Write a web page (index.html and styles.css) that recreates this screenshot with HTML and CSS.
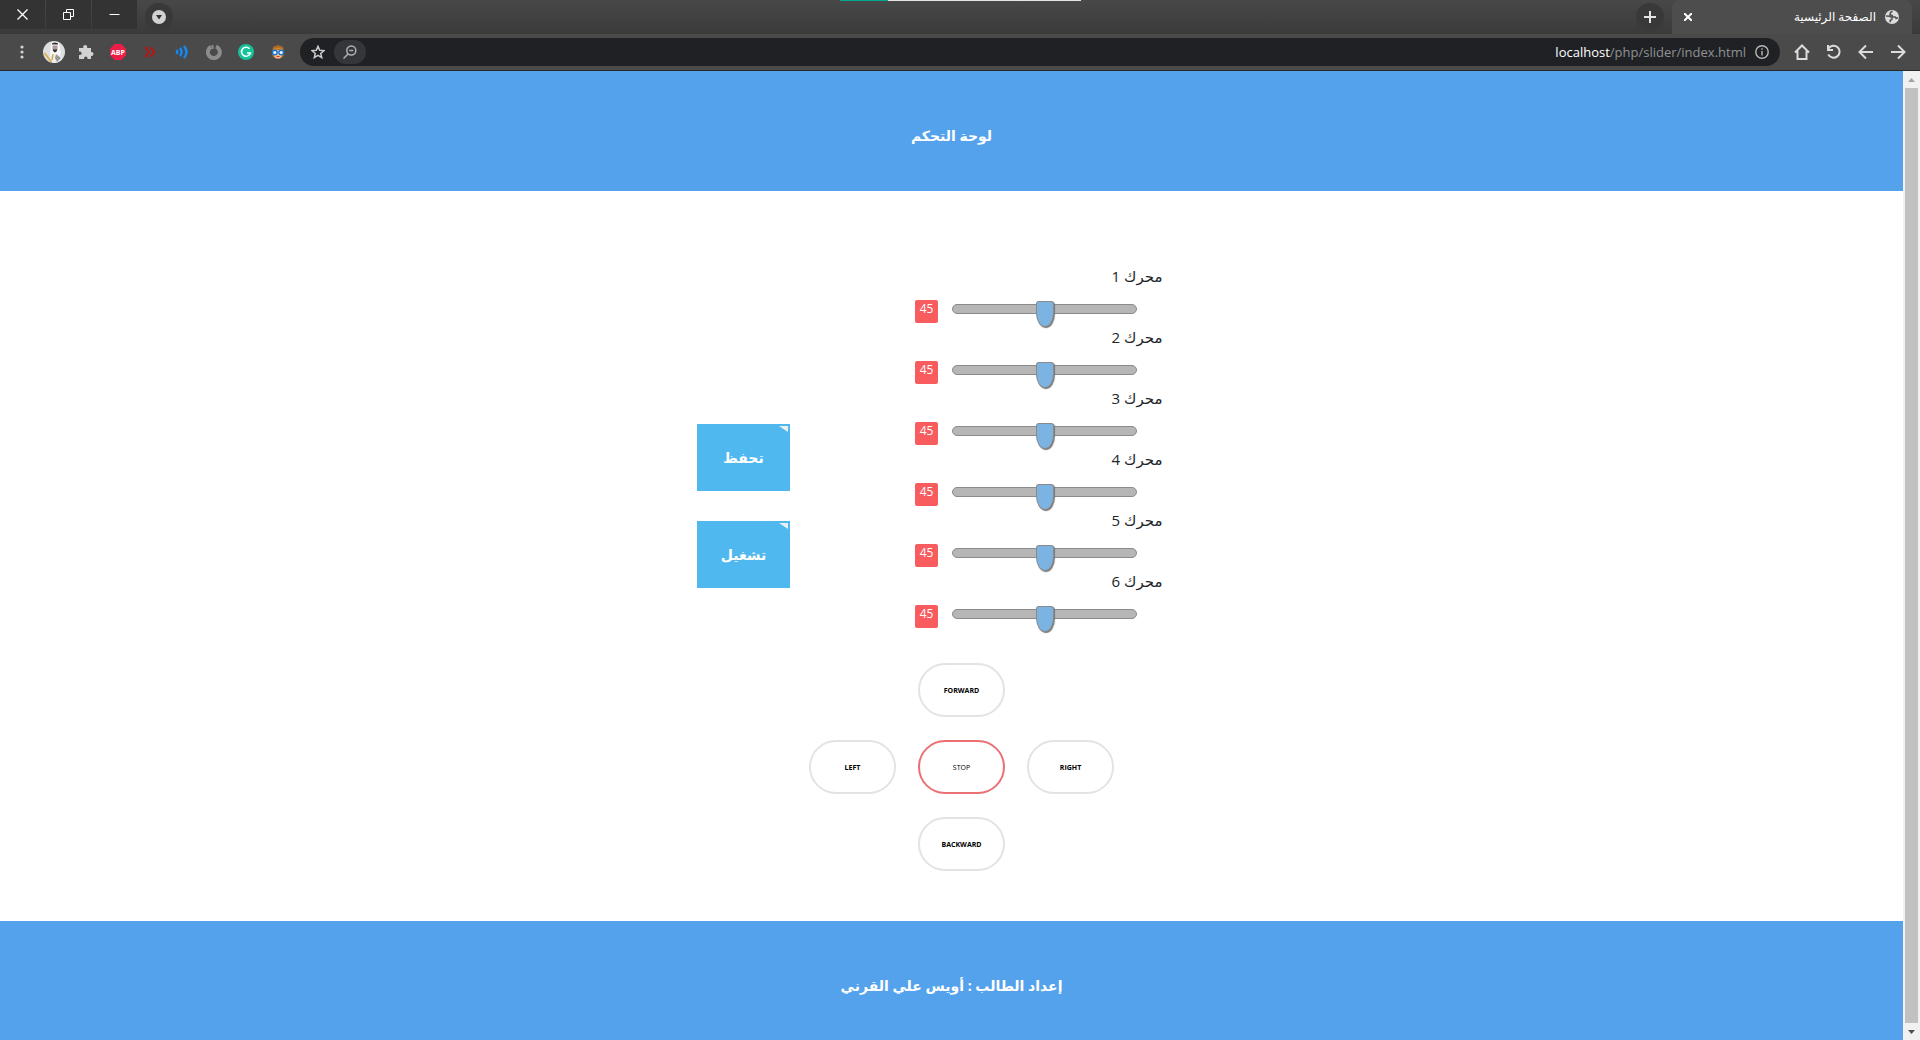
FILE: index.html
```html
<!DOCTYPE html>
<html lang="ar">
<head>
<meta charset="utf-8">
<title>الصفحة الرئيسية</title>
<link rel="stylesheet" href="styles.css">
</head>
<body>
<div class="tabstrip">
  <div class="window-controls">
    <button aria-label="Close"><svg width="11" height="11" viewBox="0 0 11 11"><path d="M.5.5l10 10M10.500.5L.5 10.500" stroke-width="1.300"/></svg></button>
    <button aria-label="Restore"><svg width="11" height="11" viewBox="0 0 11 11"><path d="M.5 3.500h7v7h-7zM3.500 3V.500h7v7H8"/></svg></button>
    <button aria-label="Minimize"><svg width="11" height="11" viewBox="0 0 11 11"><path d="M.5 5.500h10"/></svg></button>
  </div>
  <button class="round search-tabs" aria-label="Search tabs"><svg width="14" height="14" viewBox="0 0 14 14"><circle cx="7" cy="7" r="7" fill="#d2d2d2"/><path d="M4 5h6L7 9.500z" fill="#333"/></svg></button>
  <div class="loader"><span></span></div>
  <button class="round new-tab" aria-label="New tab"><svg width="12" height="12" viewBox="0 0 12 12"><path d="M6 0v12M0 6h12" stroke="#e4e4e4" stroke-width="2"/></svg></button>
  <div class="tab">
    <button aria-label="Close tab"><svg width="8" height="8" viewBox="0 0 8 8"><path d="M0 0l8 8M8 0L0 8" stroke="#fff" stroke-width="2"/></svg></button>
    <span class="tab-title" dir="rtl">الصفحة الرئيسية</span>
    <svg width="14" height="14" viewBox="0 0 14 14"><circle cx="7" cy="7" r="7" fill="#dcdcdc"/><path d="M7.500 1.200 5.500 2.500 5 4.800l2 .7 1 1.500h2.200l1 1.500L13 7.500M1 6l3.500.2 2.500 1.300-.2 2-1.600.8v2" fill="none" stroke="#555" stroke-width="1.600"/></svg>
  </div>
</div>
<div class="toolbar">
  <div class="extensions">
    <button aria-label="Menu"><svg width="4" height="14" viewBox="0 0 4 14" fill="#d2d2d2"><circle cx="2" cy="2" r="1.600"/><circle cx="2" cy="7" r="1.600"/><circle cx="2" cy="12" r="1.600"/></svg></button>
    <button aria-label="Profile"><svg width="22" height="22" viewBox="0 0 22 22"><circle cx="11" cy="11" r="11" fill="#dedede"/><path d="M7 20c-1-4 0-7 1-9l6 1c3 1 5 4 5 6-3 4-8 5-12 2z" fill="#eee"/><path d="M8 3c1-3 7-3 8 0l2 10-3 2-5-1-3 1z" fill="#f8f8f8"/><path d="M9 2.500c2-1.500 4-1.500 6 0v1H9z" fill="#333"/><path d="M9.500 4.500h5V9l-2.500 2-2.500-2z" fill="#a99"/><path d="M10 8.500h4V10l-2 1.500L10 10z" fill="#333"/><path d="M13 13l5 4-4 4-2-4z" fill="#999"/><path d="M1.500 12l7 9M10 13l-1 6" stroke="#d8a93c" stroke-width="1.500"/></svg></button>
    <button aria-label="Extensions"><svg width="16" height="16" viewBox="0 0 16 16"><path d="M1 4h4.200V3a2 2 0 0 1 4 0v1H13v4h.500a2 2 0 0 1 0 4H13v3H9.500v-.800a1.700 1.700 0 0 0-3.400 0v.800H1v-4h1a1.700 1.700 0 0 0 0-3.400H1z" fill="#d2d2d2"/></svg></button>
    <button aria-label="ABP"><svg width="16" height="16" viewBox="0 0 16 16"><path d="M4.700 0h6.600L16 4.700v6.600L11.300 16H4.700L0 11.300V4.700z" fill="#ed1e45"/><text x="8" y="11" text-anchor="middle" class="abp">ABP</text></svg></button>
    <button aria-label="Fast forward"><svg width="12" height="12" viewBox="0 0 12 12" fill="none" stroke="#c3100f" stroke-width="1.800"><path d="M1 1l4 5-4 5M6 1l4.500 5L6 11"/></svg></button>
    <button aria-label="Read aloud"><svg width="14" height="14" viewBox="0 0 14 14" fill="none" stroke="#1389f5" stroke-width="2.400"><path d="M1.500 5q1.500 2 0 4M5 3q3 4 0 8M9 1q5 6 0 12"/></svg></button>
    <button aria-label="Power"><svg width="16" height="16" viewBox="0 0 16 16" fill="none" stroke="#8c8c8c" stroke-width="4"><path d="M10 2.500a6 6 0 1 1-5 .3"/><path d="M6.500 1v4" stroke-width="2"/></svg></button>
    <button aria-label="Grammar"><svg width="16" height="16" viewBox="0 0 16 16"><circle cx="8" cy="8" r="8" fill="#15c39a"/><path d="M11.500 4.800A4.500 4.500 0 1 0 12.400 9H9" fill="none" stroke="#fff" stroke-width="1.600"/></svg></button>
    <button aria-label="Bookworm"><svg width="14" height="14" viewBox="0 0 14 14"><path d="M2 2q5-3.500 10 0l1 8-2 3H3l-2-3z" fill="#ad6a22"/><path d="M3 5h8v6l-2 2.500H5L3 11z" fill="#f6bd8c"/><path d="M2 5q5-3 10 0" stroke="#c9822f" stroke-width="2" fill="none"/><g fill="#e8f4ff" stroke="#1677cf" stroke-width="1.400"><circle cx="3.800" cy="7.500" r="2.300"/><circle cx="10.200" cy="7.500" r="2.300"/></g><path d="M5.500 11.500h3" stroke="#c33"/></svg></button>
  </div>
  <div class="omnibox">
    <button aria-label="Bookmark"><svg width="14" height="14" viewBox="0 0 14 14" fill="none" stroke="#ccc" stroke-width="1.500"><path d="M7 1.300l1.700 4 4.300.300-3.300 2.800 1 4.200L7 10.300l-3.700 2.300 1-4.200L1 5.600l4.300-.300z"/></svg></button>
    <button class="zoom" aria-label="Zoom"><svg width="14" height="14" viewBox="0 0 14 14" fill="none" stroke="#b0b0b0" stroke-width="1.500"><circle cx="8.300" cy="5.500" r="4.500"/><path d="M5 9l-4.500 4.500M6.300 5.500h4"/></svg></button>
    <span class="url"><b>localhost</b>/php/slider/index.html</span>
    <svg width="14" height="14" viewBox="0 0 14 14" fill="none" stroke="#b8b8b8" stroke-width="1.400"><circle cx="7" cy="7" r="6.200"/><path d="M7 6v4.500M7 3.200v1.600"/></svg>
  </div>
  <div class="nav">
    <button aria-label="Home"><svg width="16" height="16" viewBox="0 0 16 16"><path d="M1 8.500L8 1.500l7 7M3.500 7v8h9V7"/></svg></button>
    <button aria-label="Reload"><svg width="16" height="16" viewBox="0 0 16 16"><path d="M2.500 4.500A6 6 0 1 1 2.300 10.500M2 1v5h5"/></svg></button>
    <button aria-label="Back"><svg width="16" height="16" viewBox="0 0 16 16"><path d="M15 8H2M8 1.500L1.500 8 8 14.500"/></svg></button>
    <button aria-label="Forward"><svg width="16" height="16" viewBox="0 0 16 16"><path d="M1 8h13M8 1.500L14.500 8 8 14.500"/></svg></button>
  </div>
</div>
<div class="viewport">
  <div class="page">
    <header class="band"><h1 dir="rtl">لوحة التحكم</h1></header>
    <main>
      <form class="controls">
        <div class="actions">
          <button type="button" dir="rtl">تحفظ</button>
          <button type="button" dir="rtl">تشغيل</button>
        </div>
        <div class="motors">
          <div class="motor"><label for="m1" dir="rtl">محرك 1</label><output for="m1">45</output><input id="m1" type="range" min="0" max="90" value="45"></div>
          <div class="motor"><label for="m2" dir="rtl">محرك 2</label><output for="m2">45</output><input id="m2" type="range" min="0" max="90" value="45"></div>
          <div class="motor"><label for="m3" dir="rtl">محرك 3</label><output for="m3">45</output><input id="m3" type="range" min="0" max="90" value="45"></div>
          <div class="motor"><label for="m4" dir="rtl">محرك 4</label><output for="m4">45</output><input id="m4" type="range" min="0" max="90" value="45"></div>
          <div class="motor"><label for="m5" dir="rtl">محرك 5</label><output for="m5">45</output><input id="m5" type="range" min="0" max="90" value="45"></div>
          <div class="motor"><label for="m6" dir="rtl">محرك 6</label><output for="m6">45</output><input id="m6" type="range" min="0" max="90" value="45"></div>
        </div>
      </form>
      <div class="pad">
        <button class="forward">FORWARD</button>
        <button class="left">LEFT</button>
        <button class="stop">STOP</button>
        <button class="right">RIGHT</button>
        <button class="backward">BACKWARD</button>
      </div>
    </main>
    <footer class="band"><p dir="rtl">إعداد الطالب : أويس علي القرني</p></footer>
  </div>
  <div class="scrollbar">
    <svg width="17" height="17" viewBox="0 0 17 17"><path d="M5 11h7L8.500 7z" fill="#a3a3a3"/></svg>
    <div class="scroll-thumb"></div>
    <svg width="17" height="17" viewBox="0 0 17 17"><path d="M5 7h7l-3.500 4z" fill="#505050"/></svg>
  </div>
</div>
</body>
</html>
```
FILE: styles.css
```css
* { box-sizing: border-box; }
body {
  margin: 0;
  min-height: 100vh;
  display: flex;
  flex-direction: column;
  font-family: "Open Sans", "Noto Sans", "DejaVu Sans", sans-serif;
  color: #212529;
  background: #fff;
}
button { margin: 0; padding: 0; border: 0; background: none; font: inherit; color: inherit; }
svg { display: block; }

/* tab strip */
.tabstrip {
  position: relative;
  display: flex;
  height: 34px;
  padding-right: 8px;
  background: linear-gradient(#484848, #3a3a3a);
}
.window-controls { display: flex; gap: 1px; height: 29px; }
.window-controls button { width: 45px; display: grid; place-items: center; background: #333; }
.window-controls path { fill: none; stroke: #fff; }
.round { width: 28px; height: 28px; margin-top: 3px; border-radius: 50%; background: #393939; display: grid; place-items: center; }
.search-tabs { margin-left: 8px; }
.new-tab { margin-left: auto; margin-right: 8px; }
.loader { position: absolute; top: 0; left: 840px; width: 241px; height: 1px; background: #e5e5e5; }
.loader span { display: block; width: 48px; height: 1px; background: #00a88e; }
.tab {
  width: 240px;
  padding: 0 13px 0 12px;
  display: flex;
  align-items: center;
  gap: 9px;
  border-radius: 8px 8px 0 0;
  background: #4d4d4d;
  color: #fff;
}
.tab-title { margin-left: auto; font-size: 12px; line-height: 16px; }

/* toolbar */
.toolbar {
  display: flex;
  align-items: center;
  height: 37px;
  padding: 0 14px 0 6px;
  background: #4a4a4a;
  border-bottom: 1px solid #27282b;
}
.extensions { display: flex; }
.extensions button { width: 32px; display: grid; place-items: center; }
.abp { font-size: 7px; font-weight: 700; fill: #fff; }
.omnibox {
  flex: 1;
  height: 28px;
  margin: 0 14px 0 6px;
  padding: 0 11px;
  border-radius: 14px;
  display: flex;
  align-items: center;
  gap: 9px;
  background: #202124;
}
.zoom { width: 32px; height: 24px; border-radius: 12px; background: #35363a; display: grid; place-items: center; }
.url { margin-left: auto; font-size: 13px; line-height: 20px; color: #8f9194; }
.url b { font-weight: 400; color: #fff; }
.nav { display: flex; gap: 16px; }
.nav path { fill: none; stroke: #dcdcdc; stroke-width: 2; }

/* page area and scrollbar */
.viewport { flex: 1; display: flex; }
.page { flex: 1; display: flex; flex-direction: column; }
.scrollbar { width: 17px; display: flex; flex-direction: column; background: #f1f1f1; }
.scroll-thumb { flex: 1; margin: 0 2px; background: #c1c1c1; }
.band {
  min-height: 119px;
  padding-top: 10px;
  display: grid;
  place-items: center;
  background: #55a2ec;
  color: #fff;
}
header.band { min-height: 120px; }
.band h1, .band p { margin: 0; font-size: 14px; line-height: 24px; font-weight: 700; }
main { flex: 1; padding: 71px 0 50px; }

/* motors and actions */
.controls { display: flex; justify-content: center; align-items: flex-end; gap: 125px; }
.actions { display: flex; flex-direction: column; gap: 30px; margin-bottom: 40px; }
.actions button {
  position: relative;
  width: 93px;
  height: 67px;
  background: #4fb8ef;
  color: #fff;
  font-size: 14px;
  font-weight: 700;
}
.actions button::after {
  content: "";
  position: absolute;
  top: 2px;
  right: 2px;
  width: 9px;
  height: 6px;
  background: #eee;
  clip-path: polygon(0 0, 100% 0, 100% 100%);
}
.motors { width: 291px; }
.motor {
  display: grid;
  grid-template-columns: 23px 185px;
  grid-template-rows: 28px 23px;
  gap: 10px 14px;
  align-items: start;
}
.motor label { grid-column: 1 / -1; justify-self: end; width: 52px; margin-right: -26px; white-space: nowrap; font-size: 15px; line-height: 28px; text-align: center; }
.motor output {
  height: 23px;
  border-radius: 2px;
  background: #f95c5f;
  color: #fff;
  font-size: 12px;
  line-height: 18px;
  text-align: center;
}
.motor input { appearance: none; width: 185px; height: 18px; margin: 0; background: none; }
.motor input::-webkit-slider-runnable-track {
  height: 10px;
  border: 1px solid #8b8b8b;
  border-radius: 5px;
  background: #b6b6b6;
}
.motor input::-webkit-slider-thumb {
  appearance: none;
  width: 18px;
  height: 26px;
  margin-top: -4px;
  border: 1px solid #8a8a8a;
  border-radius: 3px 3px 9px 9px / 3px 3px 14px 14px;
  background: #7bb3e2;
  box-shadow: 1px 1px 1px #777;
}

/* direction pad */
.pad {
  display: grid;
  grid-template-columns: repeat(3, 87px);
  grid-template-areas: ". forward ." "left stop right" ". backward .";
  grid-auto-rows: 54px;
  gap: 23px 22px;
  justify-content: center;
  margin-top: 35px;
  padding-left: 20px;
}
.pad button {
  border: 2px solid #e3e3e3;
  border-radius: 27px;
  background: #fff;
  color: #000;
  font-size: 7px;
  font-weight: 700;
}
.forward { grid-area: forward; }
.left { grid-area: left; }
.right { grid-area: right; }
.backward { grid-area: backward; }
.pad .stop { grid-area: stop; border-color: #ea7074; font-weight: 400; }
```
